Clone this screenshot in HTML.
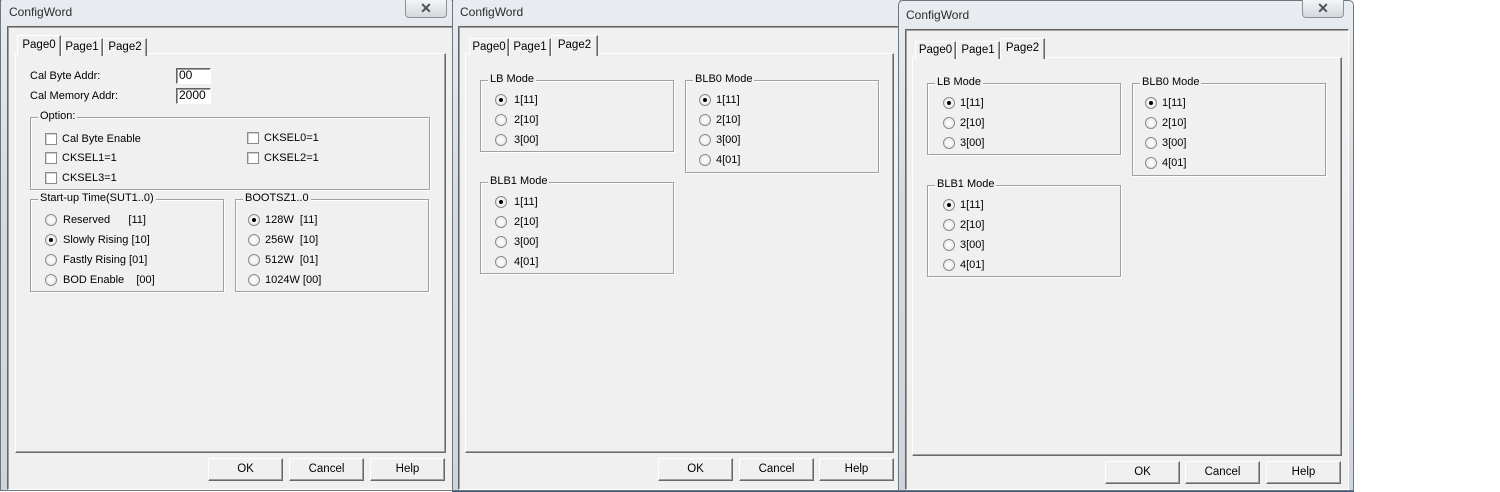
<!DOCTYPE html>
<html><head><meta charset="utf-8"><style>
*{box-sizing:border-box;margin:0;padding:0}
body{width:1500px;height:492px;background:#fff;position:relative;overflow:hidden;font-family:"Liberation Sans",Tahoma,sans-serif;font-size:11px;color:#000}
div,span{position:absolute}
.frame{background:linear-gradient(#e9edf1,#d6dbe1 40%,#cfd5dc);border:1px solid #6d7780;border-radius:5px 5px 0 0}
.title{font-size:12px;color:#2a2a2a;white-space:nowrap}
.close{width:42px;height:18px;border:1px solid #8a8f96;border-top:none;border-radius:0 0 4px 4px;background:linear-gradient(#f3f4f6,#d4d8dc);text-align:center;font-size:14px;font-weight:bold;color:#4b4f58;line-height:17px}
.client{background:#f0f0f0;border-left:1px solid #646464;border-top:1px solid #646464;border-right:1px solid #fff;border-bottom:1px solid #fff;box-shadow:inset 1px 1px #a0a0a0}
.panel{border-left:1px solid #fff;border-top:1px solid #fff;border-right:1px solid #696969;border-bottom:1px solid #696969;box-shadow:inset -1px -1px #a0a0a0;background:#f0f0f0}
.tab{height:18px;border:1px solid #fff;border-right:1px solid #696969;border-bottom:none;background:#f0f0f0;text-align:center;line-height:16px;font-size:11.5px;box-shadow:inset -1px 0 #a0a0a0}
.tab.sel{height:21px;z-index:2;line-height:18px}
.grp{border:1px solid #a0a0a0;box-shadow:1px 1px #fff, inset 1px 1px #fff}
.gl{background:#f0f0f0;top:-8px;left:7px;padding:0 2px;white-space:nowrap}
.rb{width:12px;height:12px;border-radius:50%;border:1px solid #8b8b8b;background:radial-gradient(#fff,#e4e4e4)}
.rb.on::after{content:"";position:absolute;left:3px;top:3px;width:4px;height:4px;border-radius:50%;background:#000}
.cb{width:12px;height:12px;border:1px solid #8b8b8b;background:#fff;box-shadow:inset 1px 1px #d0d0d0}
.t{white-space:nowrap;line-height:13px}
.edit{background:#fff;border-left:1px solid #646464;border-top:1px solid #646464;border-right:1px solid #fff;border-bottom:1px solid #fff;box-shadow:inset 1px 1px #a0a0a0;font-size:12px;padding-left:2px;line-height:13px}
.btn{width:75px;height:23px;background:#f0f0f0;border-left:1px solid #fff;border-top:1px solid #fff;border-right:1px solid #696969;border-bottom:1px solid #696969;box-shadow:inset -1px -1px #a0a0a0;text-align:center;line-height:20px;font-size:11.5px}
.shade{background:#3c5a78}
</style></head><body>

<!-- Window 1 -->
<div class="shade" style="left:0;top:488;width:452px;height:4px"></div>
<div class="frame" style="left:0;top:-3px;width:453px;height:494px"></div>
<div class="title" style="left:9px;top:5px">ConfigWord</div>
<div class="close" style="left:405px;top:0">✕</div>
<div class="client" style="left:7px;top:26px;width:446px;height:464px"></div>
<div class="panel" style="left:15px;top:53px;width:431px;height:400px"></div>
<div class="tab sel" style="left:17px;top:35px;width:44px">Page0</div>
<div class="tab" style="left:61px;top:38px;width:42px">Page1</div>
<div class="tab" style="left:103px;top:38px;width:44px">Page2</div>
<div class="t" style="left:30px;top:70px">Cal Byte Addr:</div>
<div class="edit" style="left:176px;top:68px;width:35px;height:16px">00</div>
<div class="t" style="left:30px;top:90px">Cal Memory Addr:</div>
<div class="edit" style="left:176px;top:88px;width:35px;height:16px">2000</div>
<div class="grp" style="left:30px;top:117px;width:400px;height:73px"><span class="gl">Option:</span></div>
<div class="cb" style="left:45px;top:133px"></div><div class="t" style="left:62px;top:133px">Cal Byte Enable</div>
<div class="cb" style="left:45px;top:152px"></div><div class="t" style="left:62px;top:152px">CKSEL1=1</div>
<div class="cb" style="left:45px;top:172px"></div><div class="t" style="left:62px;top:172px">CKSEL3=1</div>
<div class="cb" style="left:247px;top:132px"></div><div class="t" style="left:264px;top:132px">CKSEL0=1</div>
<div class="cb" style="left:247px;top:152px"></div><div class="t" style="left:264px;top:152px">CKSEL2=1</div>
<div class="grp" style="left:30px;top:199px;width:194px;height:93px"><span class="gl">Start-up Time(SUT1..0)</span></div>
<div class="rb" style="left:45px;top:214px"></div><div class="t" style="left:63px;top:214px">Reserved&nbsp;&nbsp;&nbsp;&nbsp;&nbsp;&nbsp;[11]</div>
<div class="rb on" style="left:45px;top:234px"></div><div class="t" style="left:63px;top:234px">Slowly Rising [10]</div>
<div class="rb" style="left:45px;top:254px"></div><div class="t" style="left:63px;top:254px">Fastly Rising [01]</div>
<div class="rb" style="left:45px;top:274px"></div><div class="t" style="left:63px;top:274px">BOD Enable&nbsp;&nbsp;&nbsp;&nbsp;[00]</div>
<div class="grp" style="left:235px;top:199px;width:194px;height:93px"><span class="gl">BOOTSZ1..0</span></div>
<div class="rb on" style="left:248px;top:214px"></div><div class="t" style="left:265px;top:214px">128W&nbsp;&nbsp;[11]</div>
<div class="rb" style="left:248px;top:234px"></div><div class="t" style="left:265px;top:234px">256W&nbsp;&nbsp;[10]</div>
<div class="rb" style="left:248px;top:254px"></div><div class="t" style="left:265px;top:254px">512W&nbsp;&nbsp;[01]</div>
<div class="rb" style="left:248px;top:274px"></div><div class="t" style="left:265px;top:274px">1024W [00]</div>
<div class="btn" style="left:208px;top:458px">OK</div>
<div class="btn" style="left:289px;top:458px">Cancel</div>
<div class="btn" style="left:370px;top:458px">Help</div>

<!-- Window 2 -->
<div class="shade" style="left:452px;top:488px;width:448px;height:4px"></div>
<div class="frame" style="left:452px;top:-3px;width:449px;height:494px"></div>
<div class="title" style="left:460px;top:5px">ConfigWord</div>
<div class="client" style="left:458px;top:26px;width:443px;height:464px"></div>
<div class="panel" style="left:465px;top:53px;width:429px;height:400px"></div>
<div class="tab" style="left:469px;top:38px;width:40px">Page0</div>
<div class="tab" style="left:509px;top:38px;width:42px">Page1</div>
<div class="tab sel" style="left:551px;top:35px;width:47px">Page2</div>
<div class="grp" style="left:480px;top:80px;width:194px;height:72px"><span class="gl">LB Mode</span></div>
<div class="rb on" style="left:495px;top:94px"></div><div class="t" style="left:514px;top:94px">1[11]</div>
<div class="rb" style="left:495px;top:114px"></div><div class="t" style="left:514px;top:114px">2[10]</div>
<div class="rb" style="left:495px;top:134px"></div><div class="t" style="left:514px;top:134px">3[00]</div>
<div class="grp" style="left:685px;top:80px;width:194px;height:93px"><span class="gl">BLB0 Mode</span></div>
<div class="rb on" style="left:699px;top:94px"></div><div class="t" style="left:716px;top:94px">1[11]</div>
<div class="rb" style="left:699px;top:114px"></div><div class="t" style="left:716px;top:114px">2[10]</div>
<div class="rb" style="left:699px;top:134px"></div><div class="t" style="left:716px;top:134px">3[00]</div>
<div class="rb" style="left:699px;top:154px"></div><div class="t" style="left:716px;top:154px">4[01]</div>
<div class="grp" style="left:480px;top:182px;width:194px;height:92px"><span class="gl">BLB1 Mode</span></div>
<div class="rb on" style="left:495px;top:196px"></div><div class="t" style="left:514px;top:196px">1[11]</div>
<div class="rb" style="left:495px;top:216px"></div><div class="t" style="left:514px;top:216px">2[10]</div>
<div class="rb" style="left:495px;top:236px"></div><div class="t" style="left:514px;top:236px">3[00]</div>
<div class="rb" style="left:495px;top:256px"></div><div class="t" style="left:514px;top:256px">4[01]</div>
<div class="btn" style="left:658px;top:458px">OK</div>
<div class="btn" style="left:739px;top:458px">Cancel</div>
<div class="btn" style="left:819px;top:458px">Help</div>

<!-- Window 3 -->
<div class="shade" style="left:900px;top:488px;width:454px;height:4px"></div>
<div class="frame" style="left:898px;top:0;width:456px;height:491px"></div>
<div class="title" style="left:906px;top:8px">ConfigWord</div>
<div class="close" style="left:1302px;top:0">✕</div>
<div class="client" style="left:905px;top:29px;width:444px;height:461px"></div>
<div class="panel" style="left:912px;top:57px;width:430px;height:399px"></div>
<div class="tab" style="left:915px;top:41px;width:41px">Page0</div>
<div class="tab" style="left:956px;top:41px;width:44px">Page1</div>
<div class="tab sel" style="left:1000px;top:38px;width:45px">Page2</div>
<div class="grp" style="left:927px;top:83px;width:194px;height:72px"><span class="gl">LB Mode</span></div>
<div class="rb on" style="left:943px;top:97px"></div><div class="t" style="left:960px;top:97px">1[11]</div>
<div class="rb" style="left:943px;top:117px"></div><div class="t" style="left:960px;top:117px">2[10]</div>
<div class="rb" style="left:943px;top:137px"></div><div class="t" style="left:960px;top:137px">3[00]</div>
<div class="grp" style="left:1132px;top:83px;width:194px;height:93px"><span class="gl">BLB0 Mode</span></div>
<div class="rb on" style="left:1145px;top:97px"></div><div class="t" style="left:1162px;top:97px">1[11]</div>
<div class="rb" style="left:1145px;top:117px"></div><div class="t" style="left:1162px;top:117px">2[10]</div>
<div class="rb" style="left:1145px;top:137px"></div><div class="t" style="left:1162px;top:137px">3[00]</div>
<div class="rb" style="left:1145px;top:157px"></div><div class="t" style="left:1162px;top:157px">4[01]</div>
<div class="grp" style="left:927px;top:185px;width:194px;height:92px"><span class="gl">BLB1 Mode</span></div>
<div class="rb on" style="left:943px;top:199px"></div><div class="t" style="left:960px;top:199px">1[11]</div>
<div class="rb" style="left:943px;top:219px"></div><div class="t" style="left:960px;top:219px">2[10]</div>
<div class="rb" style="left:943px;top:239px"></div><div class="t" style="left:960px;top:239px">3[00]</div>
<div class="rb" style="left:943px;top:259px"></div><div class="t" style="left:960px;top:259px">4[01]</div>
<div class="btn" style="left:1105px;top:461px">OK</div>
<div class="btn" style="left:1185px;top:461px">Cancel</div>
<div class="btn" style="left:1266px;top:461px">Help</div>
</body></html>
